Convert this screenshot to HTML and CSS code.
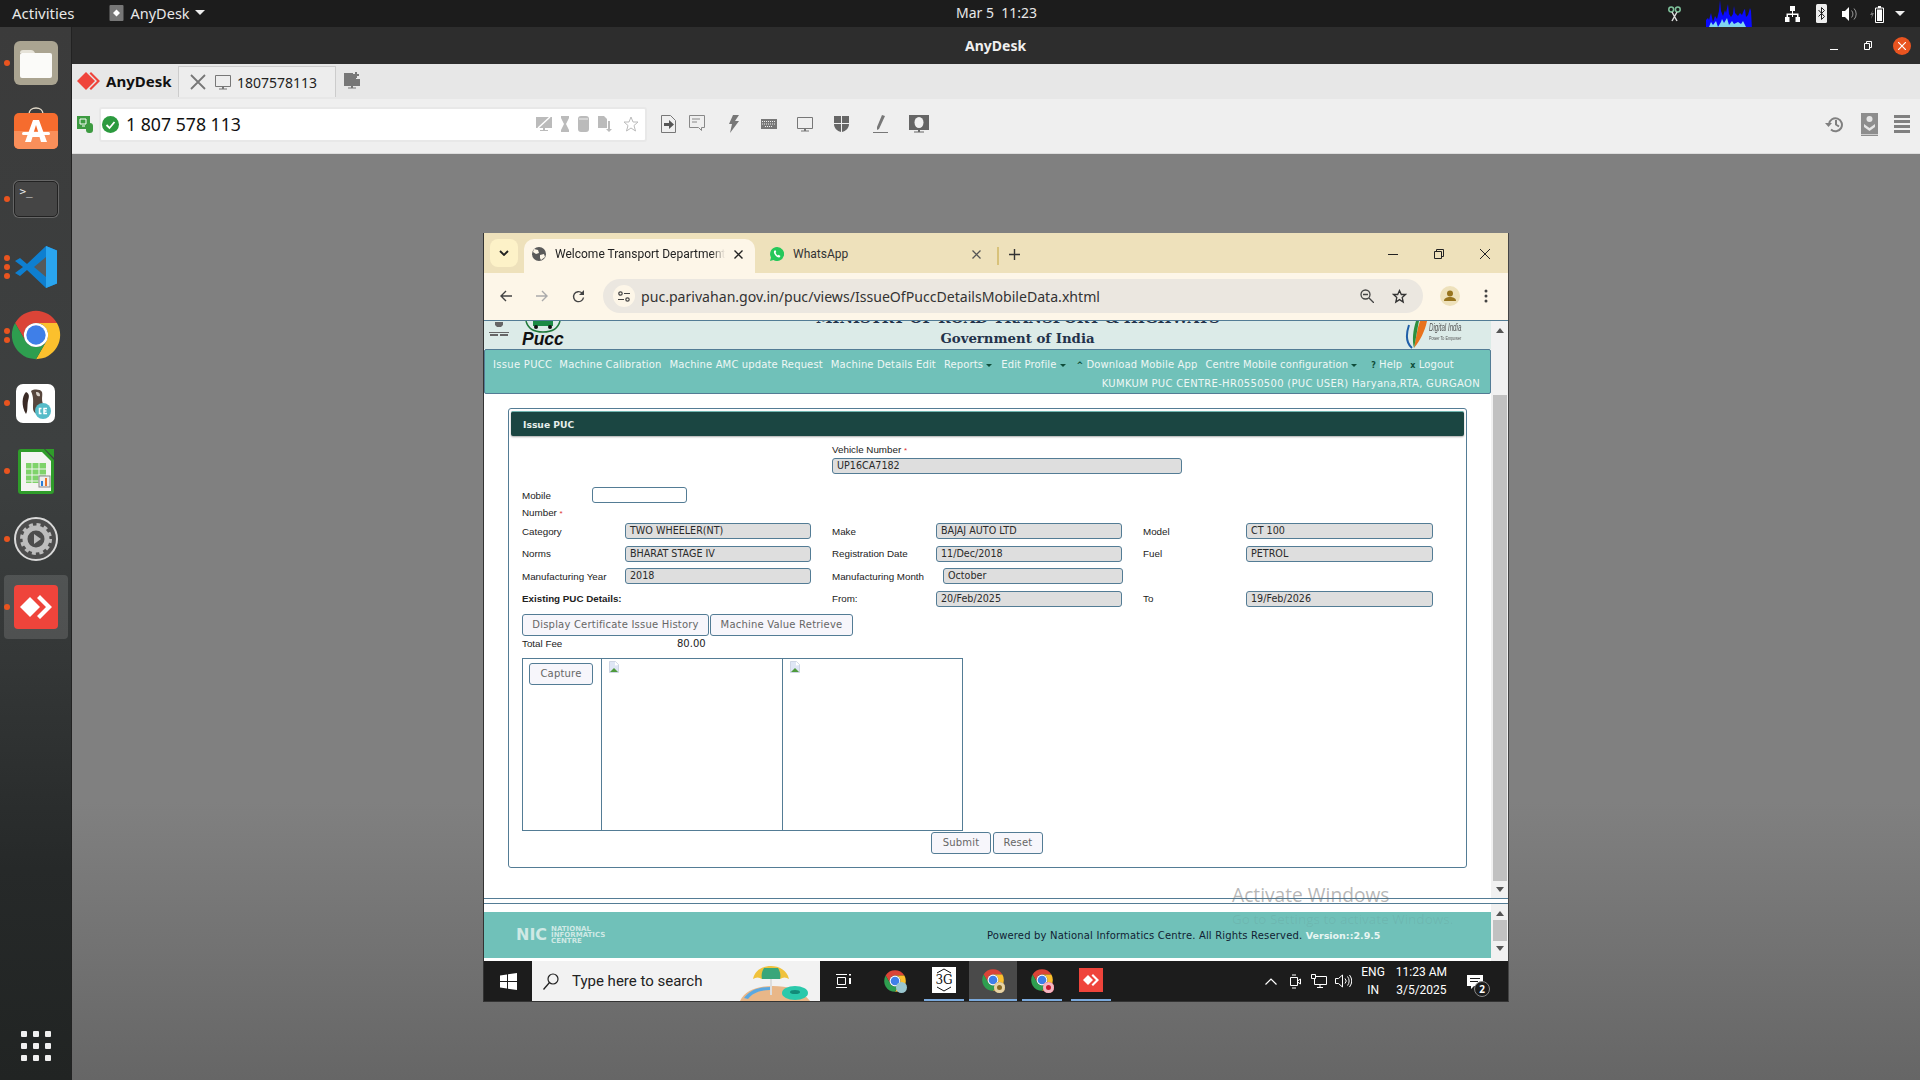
FILE: index.html
```html
<!DOCTYPE html>
<html lang="en">
<head>
    <meta charset="UTF-8">
    <meta name="viewport" content="width=device-width, initial-scale=1.0">
    <title>AnyDesk</title>
    <link rel="stylesheet" href="styles.css">
</head>
<body>
    <!-- shared icons -->
    <svg class="defs" width="0" height="0">
        <symbol id="chrome" viewBox="0 0 48 48">
            <path fill="#db4437" d="M6.68 14A20 20 0 0 1 41.32 14H24A10 10 0 0 0 15.34 29Z"/>
            <path fill="#fbc02d" d="M41.32 14A20 20 0 0 1 24 44L32.66 29A10 10 0 0 0 24 14Z"/>
            <path fill="#2e9e4f" d="M24 44A20 20 0 0 1 6.68 14L15.34 29A10 10 0 0 0 32.66 29Z"/>
            <circle cx="24" cy="24" r="10" fill="#fff"/>
            <circle cx="24" cy="24" r="8" fill="#3f7fe8"/>
        </symbol>
        <symbol id="monitor" viewBox="0 0 16 16">
            <path fill="none" stroke="currentColor" d="M.5 1.5h15v11H.5z"/>
            <path fill="currentColor" d="M7 13h2v1.500h3v1H4v-1h3z"/>
        </symbol>
        <symbol id="broken" viewBox="0 0 10 12">
            <path fill="#dfe6f5" stroke="#b9c2d6" stroke-width=".6" d="M.5.500h6l3 3v8h-9z"/>
            <path fill="#4f9a3c" d="M1 11l4-4 4 4z"/>
            <path fill="#fff" d="M6 .5l3.500 3.500-3.500.500z"/>
        </symbol>
    </svg>

    <div class="topbar">
        <span class="activities">Activities</span>
        <div class="app-menu">
            <svg class="app-menu-icon" viewBox="0 0 14 16"><rect width="14" height="16" rx="1" fill="#777"/><path fill="#fff" d="M7 4.500l3.500 3.500L7 11.500 3.500 8z"/></svg>
            <span>AnyDesk</span>
            <span class="caret"></span>
        </div>
        <div class="clock">Mar 5&nbsp; 11:23</div>
        <div class="tray">
            <svg class="tray-scissors" width="13" height="16" viewBox="0 0 13 16"><circle cx="3.200" cy="3.500" r="2.400" fill="none" stroke="#7fc29b" stroke-width="1.500"/><circle cx="9.800" cy="3.500" r="2.400" fill="none" stroke="#7fc29b" stroke-width="1.500"/><path stroke="#ddd" stroke-width="1.500" d="M4 6l5 9M9 6l-5 9"/></svg>
            <svg class="tray-graph" width="50" height="27" viewBox="0 0 50 27">
                <path fill="#0a0aff" d="M0 27V20l2-2 1 2 2-7 2 9 2-6 2 3 2-8 1-11 1 11 2 5 2-6 1 3 2-9 1 10 2 3 2-3 1-8 1 7 3 3 2-3 2 2 2-5 1-1 1 8 2-2 2-7 1 3 1 18z"/>
                <path fill="#7fd6f0" d="M3 27l2-5 2 3 3-4 2 6 3-5 1-3 2 4 3-5 2 7 3-4 2 3 4-2 3 2 2-3 3 6z"/>
            </svg>
            <svg class="tray-net" width="15" height="16" viewBox="0 0 15 16"><path fill="#fff" d="M5 0h5v5H8v2.500h5.500V11H12V9H8v2H7V9H3v2H1.500V7.500H7V5H5zM0 11h4.500v5H0zM10.500 11H15v5h-4.500z"/></svg>
            <svg class="tray-bt" width="11" height="19" viewBox="0 0 11 19"><rect width="11" height="19" rx="1.500" fill="#eee"/><path fill="none" stroke="#222" d="M2.500 6l6 6.500-3 3V3.500l3 3-6 6"/></svg>
            <svg class="tray-vol" width="15" height="14" viewBox="0 0 15 14"><path fill="#fff" d="M0 4h3l4-4v14l-4-4H0z"/><path fill="none" stroke="#999" d="M9.500 3.500a5 5 0 0 1 0 7M12 1.500a8 8 0 0 1 0 11"/></svg>
            <svg class="tray-bat" width="14" height="18" viewBox="0 0 14 18"><path fill="#777" d="M3 5L0 10h2l-1 4 3-6H2z"/><path fill="none" stroke="#fff" d="M5.500 3h8v14.500h-8z"/><path fill="#fff" d="M8 1h3v2H8zM7 4.500h5v11.500H7z"/></svg>
            <span class="caret tray-caret"></span>
        </div>
    </div>

    <div class="main">
        <!-- ubuntu dock -->
        <div class="dock">
            <div class="dock-item">
                <i class="dot"></i>
                <svg width="44" height="44" viewBox="0 0 44 44"><rect width="44" height="44" rx="6" fill="#aaa491"/><path fill="#e6e3d9" d="M6 12c0-2 1-3 3-3h8c2 0 3 1 4 3z"/><rect x="6" y="12" width="32" height="25" rx="2" fill="#fbfbf9"/></svg>
            </div>
            <div class="dock-item store">
                <svg width="44" height="48" viewBox="0 0 44 48"><path fill="none" stroke="#e5dccb" stroke-width="1.500" d="M15 7c0-8 14-8 14 0"/><rect y="6" width="44" height="36" rx="5" fill="#f66c2e"/><path fill="#f98f5a" d="M0 24h44v13a5 5 0 0 1-5 5H5a5 5 0 0 1-5-5z"/><path fill="#fff" d="M19 13h6l8 22h-6l-1.500-5h-7L17 35h-6zM22 18l-2.500 8h5z"/><rect x="8" y="25" width="28" height="3" rx="1.500" fill="#fff"/></svg>
            </div>
            <div class="dock-item">
                <i class="dot"></i>
                <div class="term-icon"><span>&gt;_</span></div>
            </div>
            <div class="dock-item">
                <i class="dot dot-a"></i><i class="dot"></i><i class="dot dot-b"></i>
                <svg width="42" height="42" viewBox="0 0 42 42"><path fill="#0e7fd0" d="M31 0l11 4.500v33L31 42 12 24l-7 6-5-3 8-6-8-6 5-3 7 6z"/><path fill="#2aa5ef" d="M31 0l11 4.500v33L31 42z"/><path fill="#555a5c" d="M31 11L19 21l12 10z"/></svg>
            </div>
            <div class="dock-item">
                <i class="dot dot-c"></i><i class="dot dot-d"></i>
                <svg width="58" height="58" class="chrome-big"><use href="#chrome"/></svg>
            </div>
            <div class="dock-item">
                <i class="dot"></i>
                <svg width="39" height="39" viewBox="0 0 39 39"><rect width="39" height="39" rx="7" fill="#fff"/><path fill="#3a2a25" d="M10 8c-4 4-5 14 0 22 2-3 1-8 2-13 1-4 2-7-2-9z"/><path fill="#57463d" d="M15 7c3-2 9-2 11 1 1 4-1 6 1 12 1 4 0 7-2 10-4 1-8-1-8-6 0-6 1-10-2-17z"/><path fill="#d8d0c8" d="M20 8c3 0 4 1 4 4-2 1-4 0-4-4z"/><circle cx="27" cy="27" r="8" fill="#56bcc9"/><path fill="none" stroke="#fff" stroke-width="1.500" d="M25.500 24.500h-2v5h2M31 24.500h-3v5h3M28 27h2.500"/></svg>
            </div>
            <div class="dock-item">
                <i class="dot"></i>
                <svg width="36" height="45" viewBox="0 0 36 45"><path fill="#2f9c2a" d="M3 0h23l10 11v31a3 3 0 0 1-3 3H3a3 3 0 0 1-3-3V3a3 3 0 0 1 3-3z"/><path fill="#f4f4f2" d="M3 3h21l9 9v30H3z"/><path fill="#2f9c2a" d="M27 0l9 0v9z"/><path fill="#7fd36a" d="M8 14h20v20H8z"/><path stroke="#f4f4f2" d="M8 20h20M8 26h20M8 32h20M14 14v20M21 14v20"/><rect x="21" y="27" width="11" height="11" fill="#eee" stroke="#888"/><path fill="#e9762b" d="M27 29h2v8h-2z"/><path fill="#2b7dd6" d="M23 32h2v5h-2z"/></svg>
            </div>
            <div class="dock-item">
                <i class="dot"></i>
                <svg width="44" height="44" viewBox="0 0 44 44"><circle cx="22" cy="22" r="21" fill="#4d4d4d" stroke="#d9d9d9" stroke-width="2"/><circle cx="22" cy="22" r="11" fill="none" stroke="#bdbdbd" stroke-width="5"/><circle cx="22" cy="22" r="14.500" fill="none" stroke="#bdbdbd" stroke-width="3" stroke-dasharray="4 3.600"/><path fill="#bdbdbd" d="M20 17l7 5-7 5z"/></svg>
            </div>
            <div class="dock-item is-active">
                <i class="dot"></i>
                <svg width="44" height="44" viewBox="0 0 44 44"><rect width="44" height="44" rx="4" fill="#ef443b"/><path fill="#fff" d="M6 22l10-10 10 10-10 10z"/><path fill="#fff" d="M26 10l12 12-12 12-3-3 9-9-9-9z"/></svg>
            </div>
            <div class="apps-grid">
                <i></i><i></i><i></i><i></i><i></i><i></i><i></i><i></i><i></i>
            </div>
        </div>

        <div class="app">
            <div class="titlebar">
                <span class="titlebar-name">AnyDesk</span>
                <div class="win-buttons">
                    <svg width="8" height="8" viewBox="0 0 8 8"><path stroke="#fff" d="M0 7.500h8"/></svg>
                    <svg width="8" height="9" viewBox="0 0 8 9"><path fill="none" stroke="#fff" d="M.5 2.500h5v6h-5zM2.500 2V.5h5v6H6"/></svg>
                    <span class="win-close"><svg width="8" height="8" viewBox="0 0 8 8"><path stroke="#fff" stroke-width="1.200" d="M0 0l8 8M8 0L0 8"/></svg></span>
                </div>
            </div>

            <div class="ad-tabs">
                <svg class="ad-logo" width="23" height="18" viewBox="0 0 23 18"><path fill="#ef443b" d="M0 9l9-9 9 9-9 9z"/><path fill="#ef443b" d="M14 0l9 9-9 9-1.500-1.500L20 9l-7.500-7.500z"/></svg>
                <b class="ad-brand">AnyDesk</b>
                <div class="ad-tab">
                    <svg width="16" height="16" viewBox="0 0 16 16"><path stroke="#777" stroke-width="1.800" d="M1 1l14 14M15 1L1 15"/></svg>
                    <svg class="ad-tab-mon" width="16" height="16"><use href="#monitor"/></svg>
                    <span>1807578113</span>
                </div>
                <svg class="ad-add" width="16" height="17" viewBox="0 0 16 17"><path fill="#777" d="M0 1h9v3h3v3h4v7H9v1.500h3v1H4v-1h3V14H0z"/><path fill="#777" d="M11 0h2v2h2v2h-2v2h-2V4H9V2h2z"/></svg>
            </div>

            <div class="ad-toolbar">
                <svg class="ad-status" width="16" height="17" viewBox="0 0 16 17"><rect width="13" height="13" fill="#3d9b41"/><path fill="none" stroke="#fff" d="M3 3h6v5H3zM5 10h3"/><rect x="9" y="7" width="7" height="10" rx="3" fill="#3d9b41"/></svg>
                <div class="address">
                    <svg width="17" height="17" viewBox="0 0 17 17"><circle cx="8.500" cy="8.500" r="8.500" fill="#2c9a3f"/><path fill="none" stroke="#fff" stroke-width="1.800" d="M4.500 9l3 3 5-6"/></svg>
                    <span class="address-text">1 807 578 113</span>
                    <div class="address-icons">
                        <svg width="16" height="16" viewBox="0 0 16 16"><path fill="#bbb" d="M0 1h16v11H9v2h3v1H4v-1h3v-2H0z"/><path stroke="#fff" stroke-width="1.500" d="M2 12L14 1"/></svg>
                        <svg width="8" height="16" viewBox="0 0 8 16"><path fill="#bbb" d="M0 0h8v2L5 8l3 6v2H0v-2l3-6-3-6z"/></svg>
                        <svg width="11" height="16" viewBox="0 0 11 16"><rect width="11" height="16" rx="3" fill="#bbb"/><path stroke="#eee" d="M1 3h9"/></svg>
                        <svg width="16" height="16" viewBox="0 0 16 16"><path fill="#bbb" d="M0 0h6l3 3v9H0z"/><path fill="#bbb" d="M10 5h2v8h2l-3 3-3-3h2z"/></svg>
                        <svg width="16" height="16" viewBox="0 0 16 16"><path fill="none" stroke="#bbb" d="M8 1l2 5h5l-4 3.500 1.500 5.500L8 12l-4.500 3L5 9.500 1 6h5z"/></svg>
                    </div>
                </div>
                <div class="ad-actions">
                    <svg width="15" height="18" viewBox="0 0 15 18"><path fill="none" stroke="#777" d="M.5.500h9l5 5v12H.5z"/><path fill="#555" d="M3 8h5V5l5 4.500L8 14v-3H3z"/></svg>
                    <svg width="16" height="18" viewBox="0 0 16 18"><path fill="none" stroke="#888" d="M.5.500h15v12h-3v3l-3-3h-9z"/><path stroke="#888" d="M3 4h8M3 7h5"/></svg>
                    <svg width="10" height="18" viewBox="0 0 10 18"><path fill="#777" d="M4 0h6L6 6h4L1 18l2-9H0z"/></svg>
                    <svg width="16" height="10" viewBox="0 0 16 10"><rect width="16" height="10" fill="#777"/><path stroke="#eee" stroke-dasharray="1 1" d="M1 2.500h14M1 5h14M4 7.500h8"/></svg>
                    <svg width="16" height="16" class="mon-grey"><use href="#monitor"/></svg>
                    <svg width="15" height="16" viewBox="0 0 15 16"><path fill="#666" d="M0 0h7v7H0zM8 0h7v7H8zM0 8h7v8c-4-1-7-4-7-8zM8 8h7c0 4-3 7-7 8z"/></svg>
                    <svg width="15" height="18" viewBox="0 0 15 18"><path fill="#777" d="M9 0l3 1-6 13-2 1V12z"/><path stroke="#777" d="M0 17.500h15"/></svg>
                    <svg width="20" height="18" viewBox="0 0 20 18"><path fill="#666" d="M0 0h20v15h-9v1.500h4v1H5v-1h4V15H0z"/><ellipse cx="10" cy="7.500" rx="4.500" ry="5.500" fill="#f2f2f2"/></svg>
                </div>
                <div class="ad-right">
                    <svg class="ad-history" width="18" height="18" viewBox="0 0 18 18"><path fill="none" stroke="#808080" stroke-width="2" d="M4 9a6.500 6.500 0 1 1 2 5.500M11 5v4.500l3 2"/><path fill="#808080" d="M0 8h7l-3.500 4z"/></svg>
                    <svg width="17" height="23" viewBox="0 0 17 23"><rect width="17" height="23" fill="#8d8d8d"/><path stroke="#ccc" d="M0 21.500h17"/><circle cx="8.500" cy="6" r="3" fill="#e5e5e5"/><path fill="#e5e5e5" d="M3 11l5.500 4 5.500-4v3l-5.500 4L3 14z"/></svg>
                    <svg width="16" height="18" viewBox="0 0 16 18"><path fill="#808080" d="M0 0h16v3H0zM0 5h16v3H0zM0 10h16v3H0zM0 15h16v3H0z"/></svg>
                </div>
            </div>

            <div class="remote">
                <!-- remote windows machine -->
                <div class="remote-window">
                    <div class="chrome-tabs">
                        <div class="tab-search"><svg width="10" height="6" viewBox="0 0 10 6"><path fill="none" stroke="#222" stroke-width="1.800" d="M1 1l4 4 4-4"/></svg></div>
                        <div class="chrome-tab is-current">
                            <svg width="14" height="14" viewBox="0 0 14 14"><circle cx="7" cy="7" r="7" fill="#5a5a5a"/><path fill="#fdf6e8" d="M2 2l4 1 1 3-3 1-3-2zM8 8l4-1 1 3-4 3-1-2z"/></svg>
                            <span class="tab-title">Welcome Transport Department</span>
                            <svg class="tab-x" width="9" height="9" viewBox="0 0 9 9"><path stroke="#222" stroke-width="1.400" d="M.5.5l8 8M8.500.5l-8 8"/></svg>
                        </div>
                        <div class="chrome-tab">
                            <svg width="14" height="14" viewBox="0 0 14 14"><path fill="#25c85a" d="M7 0a7 7 0 1 1-3.500 13L0 14l1-3.500A7 7 0 0 1 7 0z"/><path fill="#fff" d="M4.500 3.500c-1 1-.8 2.800.8 4.700 1.600 1.900 3.300 2.600 4.400 2l.8-1.200-1.900-1.200-.8.800C7 8 6 7 5.500 5.800l.8-.7-.8-1.800z"/></svg>
                            <span class="tab-title">WhatsApp</span>
                            <svg class="tab-x" width="9" height="9" viewBox="0 0 9 9"><path stroke="#555" stroke-width="1.300" d="M.5.5l8 8M8.500.5l-8 8"/></svg>
                        </div>
                        <i class="tab-sep"></i>
                        <svg class="tab-new" width="11" height="11" viewBox="0 0 11 11"><path stroke="#333" stroke-width="1.400" d="M5.500 0v11M0 5.500h11"/></svg>
                        <div class="chrome-win">
                            <svg width="10" height="10" viewBox="0 0 10 10"><path stroke="#222" d="M0 5.500h10"/></svg>
                            <svg width="10" height="10" viewBox="0 0 10 10"><path fill="none" stroke="#222" d="M.5 2.500h7v7h-7zM2.500 2V.5h7v7H8"/></svg>
                            <svg width="10" height="10" viewBox="0 0 10 10"><path stroke="#222" d="M0 0l10 10M10 0L0 10"/></svg>
                        </div>
                    </div>
                    <div class="chrome-bar">
                        <svg width="12" height="12" viewBox="0 0 12 12"><path fill="none" stroke="#444" stroke-width="1.400" d="M12 6H1M6 1L1 6l5 5"/></svg>
                        <svg width="12" height="12" viewBox="0 0 12 12"><path fill="none" stroke="#aaa" stroke-width="1.400" d="M0 6h11M6 1l5 5-5 5"/></svg>
                        <svg width="13" height="13" viewBox="0 0 13 13"><path fill="none" stroke="#444" stroke-width="1.400" d="M11.500 7.500a5 5 0 1 1-1.500-4.500L11.500 4.500"/><path fill="#444" d="M12 0v5H7z"/></svg>
                        <div class="omnibox">
                            <span class="site-chip"><svg width="12" height="11" viewBox="0 0 12 11"><circle cx="2.500" cy="2.500" r="1.700" fill="none" stroke="#444" stroke-width="1.200"/><circle cx="9.500" cy="8.500" r="1.700" fill="none" stroke="#444" stroke-width="1.200"/><path stroke="#444" stroke-width="1.200" d="M6 2.500h6M0 8.500h6"/></svg></span>
                            <span class="url">puc.parivahan.gov.in/puc/views/IssueOfPuccDetailsMobileData.xhtml</span>
                            <svg class="omni-zoom" width="14" height="14" viewBox="0 0 14 14"><circle cx="5.500" cy="5.500" r="4.500" fill="none" stroke="#444" stroke-width="1.300"/><path stroke="#444" stroke-width="1.300" d="M3 5.500h5M9 9l5 5"/></svg>
                            <svg class="omni-star" width="15" height="15" viewBox="0 0 15 15"><path fill="none" stroke="#333" stroke-width="1.300" d="M7.500 1.500l1.800 4h4.200l-3.300 3 1 4.500-3.700-2.400L3.800 13l1-4.500-3.300-3h4.200z"/></svg>
                        </div>
                        <svg class="bar-profile" width="20" height="20" viewBox="0 0 20 20"><circle cx="10" cy="10" r="10" fill="#eee1bb"/><circle cx="10" cy="7.500" r="3" fill="#97741f"/><path fill="#97741f" d="M4 15c0-3 3-4 6-4s6 1 6 4z"/></svg>
                        <svg class="bar-menu" width="4" height="14" viewBox="0 0 4 14"><circle cx="2" cy="2" r="1.500" fill="#444"/><circle cx="2" cy="7" r="1.500" fill="#444"/><circle cx="2" cy="12" r="1.500" fill="#444"/></svg>
                    </div>

                    <div class="page">
                        <div class="frame-top">
                            <div class="frame-body">
                                <div class="site-header">
                                    <div class="emblem"><svg width="22" height="15" viewBox="0 0 22 15"><path fill="#666" d="M7 0h8v3l-2 2H9L7 3zM1 10h20v1H1zM2 12h8v2H2zM12 12h8v2h-8z"/></svg></div>
                                    <div class="pucc-logo">
                                        <svg width="36" height="12" viewBox="0 0 36 12"><path fill="none" stroke="#1f7a3a" stroke-width="1.500" d="M1 0c2 8 9 11 17 11s15-3 17-11"/><path fill="#1b8a45" d="M8 0h20v5H8z"/><circle cx="11" cy="6" r="2" fill="#111"/><circle cx="25" cy="6" r="2" fill="#111"/></svg>
                                        <span>Pucc</span>
                                    </div>
                                    <div class="site-title">
                                        <div class="ministry">MINISTRY OF ROAD TRANSPORT &amp; HIGHWAYS</div>
                                        <div class="goi">Government of India</div>
                                    </div>
                                    <div class="digital-india">
                                        <svg width="24" height="28" viewBox="0 0 24 28"><path fill="none" stroke="#1f5fa8" stroke-width="2" d="M4 4c-3 9-3 18 3 23"/><path fill="#e8721c" d="M22 0c-2 10-7 20-13 27 2-9 3-19 6-27z"/><path fill="#2c8f3e" d="M14 0c-2 9-3 18-5 27-2-8-1-18 2-27z"/></svg>
                                        <div class="di-text"><i>Digital India</i><small>Power To Empower</small></div>
                                    </div>
                                </div>
                                <div class="menu">
                                    <div class="menu-row">
                                        <span class="m1">Issue PUCC</span>
                                        <span class="m2">Machine Calibration</span>
                                        <span class="m3">Machine AMC update Request</span>
                                        <span class="m4">Machine Details Edit</span>
                                        <span class="m5">Reports<i class="menu-caret"></i></span>
                                        <span class="m6">Edit Profile<i class="menu-caret"></i></span>
                                        <span class="m7"><b class="mi">^</b>Download Mobile App</span>
                                        <span class="m8">Centre Mobile configuration<i class="menu-caret"></i></span>
                                        <span class="m9"><b class="mi">?</b>Help</span>
                                        <span class="m10"><b class="mi">x</b>Logout</span>
                                    </div>
                                    <div class="menu-user">KUMKUM PUC CENTRE-HR0550500 (PUC USER) Haryana,RTA, GURGAON</div>
                                </div>

                                <div class="panel">
                                    <div class="panel-title">Issue PUC</div>
                                    <div class="vehicle">
                                        <label>Vehicle Number <em>*</em></label>
                                        <div class="field field-vehicle">UP16CA7182</div>
                                    </div>
                                    <div class="mobile">
                                        <label>Mobile</label>
                                        <div class="field field-mobile"></div>
                                    </div>
                                    <label class="mobile-2">Number <em>*</em></label>

                                    <div class="details">
                                        <label>Category</label><div class="field">TWO WHEELER(NT)</div><i></i>
                                        <label>Make</label><div class="field">BAJAJ AUTO LTD</div><i></i>
                                        <label>Model</label><div class="field">CT 100</div>

                                        <label>Norms</label><div class="field">BHARAT STAGE IV</div><i></i>
                                        <label>Registration Date</label><div class="field">11/Dec/2018</div><i></i>
                                        <label>Fuel</label><div class="field">PETROL</div>

                                        <label>Manufacturing Year</label><div class="field">2018</div><i></i>
                                        <label>Manufacturing Month</label><div class="field field-month">October</div><i></i>
                                        <span></span><span></span>

                                        <label class="strong">Existing PUC Details:</label><span></span><i></i>
                                        <label>From:</label><div class="field">20/Feb/2025</div><i></i>
                                        <label>To</label><div class="field">19/Feb/2026</div>
                                    </div>

                                    <div class="actions">
                                        <button type="button" class="btn btn-history">Display Certificate Issue History</button>
                                        <button type="button" class="btn btn-machine">Machine Value Retrieve</button>
                                    </div>
                                    <div class="fee">
                                        <label>Total Fee</label>
                                        <span class="fee-value">80.00</span>
                                    </div>

                                    <div class="capture">
                                        <div class="capture-cell capture-btn"><button type="button" class="btn">Capture</button></div>
                                        <div class="capture-cell"><svg width="10" height="12"><use href="#broken"/></svg></div>
                                        <div class="capture-cell"><svg width="10" height="12"><use href="#broken"/></svg></div>
                                    </div>
                                    <div class="submit-row">
                                        <button type="button" class="btn btn-submit">Submit</button>
                                        <button type="button" class="btn btn-reset">Reset</button>
                                    </div>
                                </div>
                            </div>
                            <div class="scrollbar scrollbar-top">
                                <i class="arrow-up"></i>
                                <div class="thumb"></div>
                                <i class="arrow-down"></i>
                            </div>
                        </div>

                        <div class="frame-bottom">
                            <div class="frame-body">
                                <div class="footer">
                                    <div class="nic">
                                        <b>NIC</b>
                                        <span>NATIONAL<br>INFORMATICS<br>CENTRE</span>
                                    </div>
                                    <div class="powered">Powered by National Informatics Centre. All Rights Reserved. <b>Version::2.9.5</b></div>
                                </div>
                            </div>
                            <div class="scrollbar scrollbar-bottom">
                                <i class="arrow-up"></i>
                                <div class="thumb"></div>
                                <i class="arrow-down"></i>
                            </div>
                        </div>

                        <div class="activate">
                            <div class="activate-1">Activate Windows</div>
                            <div class="activate-2">Go to Settings to activate Windows.</div>
                        </div>
                    </div>

                    <div class="taskbar">
                        <div class="win-start"><svg width="17" height="17" viewBox="0 0 17 17"><path fill="#fff" d="M0 2.500l7-1v6.500H0zM8 1.300L17 0v8H8zM0 9h7v6.500l-7-1zM8 9h9v8l-9-1.300z"/></svg></div>
                        <div class="win-search">
                            <svg width="16" height="17" viewBox="0 0 16 17"><circle cx="10" cy="6" r="5" fill="none" stroke="#222" stroke-width="1.200"/><path stroke="#222" stroke-width="1.300" d="M6.500 9.500L.5 16.500"/></svg>
                            <span>Type here to search</span>
                            <svg class="beach" width="80" height="40" viewBox="0 0 80 40"><path fill="#e9b788" d="M0 40c5-11 18-15 33-15 14 0 28 3 37 15z"/><path fill="#5ba8e0" d="M4 37c6-8 15-11 26-11v3C20 29 12 32 8 38z"/><path stroke="#ddd" stroke-width="2" d="M31 5v29"/><path fill="#f0c23c" d="M13 18c2-9 10-13 18-13s16 4 18 13c-3-2-6-2-9 0-3-2-6-2-9 0-3-2-6-2-9 0-3-2-6-2-9 0z"/><path fill="#39a67a" d="M24 7c-2 3-3 7-2 11h18c1-4 0-8-2-11z"/><ellipse cx="55" cy="32" rx="13" ry="7" fill="#2bc9ab"/><ellipse cx="55" cy="31" rx="5" ry="2" fill="#128a78"/></svg>
                        </div>
                        <div class="task-icon task-view"><svg width="16" height="16" viewBox="0 0 16 16"><path fill="none" stroke="#fff" d="M1.500 4.500h8v7h-8zM0 1.500h11M0 14.500h11"/><path fill="#fff" d="M13 1h2v1.500h-2zM13 5h2v6h-2z"/></svg></div>
                        <div class="task-icon task-c1"><svg width="26" height="26"><use href="#chrome"/></svg><i class="badge badge-a"></i></div>
                        <div class="task-icon task-3g is-open">
                            <div class="g3">
                                <svg width="24" height="26" viewBox="0 0 24 26"><path fill="none" stroke="#111" d="M5 6l7-4 7 4M5 20l7 4 7-4"/></svg>
                                <span>3G</span>
                            </div>
                        </div>
                        <div class="task-icon task-c2 is-open is-focus"><svg width="26" height="26"><use href="#chrome"/></svg><i class="badge badge-b"></i></div>
                        <div class="task-icon task-c3 is-open"><svg width="26" height="26"><use href="#chrome"/></svg><i class="badge badge-c"></i></div>
                        <div class="task-icon task-ad is-open"><svg width="24" height="24" viewBox="0 0 24 24"><rect width="24" height="24" fill="#ef443b"/><path fill="#fff" d="M4 12l5-5 5 5-5 5z"/><path fill="#fff" d="M14 6l6 6-6 6-1.500-1.500L17 12l-4.500-4.500z"/></svg></div>

                        <div class="win-tray">
                            <svg width="12" height="7" viewBox="0 0 12 7"><path fill="none" stroke="#fff" stroke-width="1.200" d="M.5 6.500L6 1l5.500 5.500"/></svg>
                            <svg width="11" height="15" viewBox="0 0 11 15"><path fill="none" stroke="#fff" d="M.5 3.500h7v8h-7zM7.500 7l3-2v5l-3-2M2 1h4M2 14h4"/></svg>
                            <svg width="16" height="14" viewBox="0 0 16 14"><path fill="none" stroke="#fff" d="M3.500 2.500h12v8h-12zM9 10.500V13M6 13.500h6"/><path fill="#1c1c1c" stroke="#fff" d="M.5.500h4v4h-4z"/></svg>
                            <svg width="17" height="14" viewBox="0 0 17 14"><path fill="none" stroke="#fff" d="M.5 4.500h3l4-3.500v12l-4-3.500h-3zM10 4.500a3.500 3.500 0 0 1 0 5M12.500 2.500a7 7 0 0 1 0 9M14.500 1a10 10 0 0 1 0 12"/></svg>
                            <div class="lang">ENG<br>IN</div>
                            <div class="win-clock">11:23 AM<br>3/5/2025</div>
                            <div class="notify">
                                <svg width="16" height="15" viewBox="0 0 16 15"><path fill="#fff" d="M0 0h16v11H7l-3 3v-3H0z"/><path stroke="#1c1c1c" d="M3 3.500h10M3 6.500h8"/></svg>
                                <span class="notify-count">2</span>
                            </div>
                        </div>
                    </div>
                </div>
            </div>
        </div>
    </div>
</body>
</html>
```

FILE: styles.css
```css
/* Desktop frame */
html, body {
    margin: 0;
    padding: 0;
}

body {
    width: 1920px;
    height: 1080px;
    overflow: hidden;
    display: flex;
    flex-direction: column;
    font-family: "Noto Sans", sans-serif;
    background: #808080;
}

.defs {
    position: absolute;
}

svg {
    display: block;
    flex: none;
}

/* Gnome top bar */
.topbar {
    height: 27px;
    flex: none;
    display: flex;
    align-items: center;
    background: #1c1c1c;
    color: #e8e8e8;
    font-size: 14px;
    position: relative;
}

.activities {
    margin: -2px 0 0 12px;
    font-size: 15px;
}

.app-menu {
    display: flex;
    align-items: center;
    margin: -2px 0 0 34px;
    font-size: 14.500px;
}

.app-menu-icon {
    width: 15px;
    height: 16px;
    margin-right: 7px;
}

.caret {
    width: 0;
    height: 0;
    margin-left: 5px;
    border-left: 5px solid transparent;
    border-right: 5px solid transparent;
    border-top: 5px solid #eee;
}

.clock {
    position: absolute;
    left: 956px;
    margin-top: -2px;
}

.tray {
    margin-left: auto;
    display: flex;
    align-items: center;
    height: 27px;
}

.tray-scissors { margin-right: 25px; }
.tray-graph { margin-right: 29px; }
.tray-net { margin-right: 16px; }
.tray-bt { margin-right: 15px; }
.tray-vol { margin-right: 13px; }
.tray-bat { margin-right: 0; }
.tray-caret { margin: 0 15px 0 11px; }

.main {
    flex: 1;
    display: flex;
    min-height: 0;
}

/* Ubuntu dock */
.dock {
    width: 72px;
    flex: none;
    box-sizing: border-box;
    display: flex;
    flex-direction: column;
    padding-top: 2px;
    border-right: 1px solid #222;
    background: linear-gradient(#3b3b3b, #3d4040 40%, #343737 60%, #262929 80%, #212423);
}

.dock-item {
    height: 68px;
    flex: none;
    display: flex;
    align-items: center;
    justify-content: center;
    position: relative;
}

.chrome-big {
    overflow: visible;
}

.dot {
    position: absolute;
    left: 4px;
    top: 31px;
    width: 6px;
    height: 6px;
    border-radius: 50%;
    background: #e9541f;
}

.dot-a { top: 22px; }
.dot-b { top: 40px; }
.dot-c { top: 27px; }
.dot-d { top: 36px; }

.term-icon {
    width: 44px;
    height: 36px;
    box-sizing: border-box;
    border: 1px solid #222;
    border-radius: 5px;
    background: #454545;
    box-shadow: 0 0 0 1px #666;
    color: #eee;
    font: 11px/14px "DejaVu Sans Mono", monospace;
    padding: 3px 0 0 5px;
}

.is-active::before {
    content: "";
    position: absolute;
    left: 4px;
    top: 2px;
    width: 64px;
    height: 64px;
    border-radius: 4px;
    background: rgba(255, 255, 255, 0.13);
}

.is-active svg {
    position: relative;
}

.apps-grid {
    margin: auto 0 19px 21px;
    width: 30px;
    display: grid;
    grid-template-columns: repeat(3, 6px);
    gap: 6px;
}

.apps-grid i {
    height: 6px;
    border-radius: 1px;
    background: #f0f0f0;
}

/* AnyDesk window */
.app {
    flex: 1;
    min-width: 0;
    display: flex;
    flex-direction: column;
}

.titlebar {
    height: 37px;
    flex: none;
    display: flex;
    align-items: center;
    position: relative;
    background: #2d2d2d;
}

.titlebar-name {
    position: absolute;
    left: 893px;
    color: #f0f0f0;
    font-size: 14px;
    font-weight: 700;
}

.win-buttons {
    margin-left: auto;
    display: flex;
    align-items: center;
    gap: 26px;
    margin-right: 9px;
}

.win-close {
    width: 18px;
    height: 18px;
    border-radius: 50%;
    background: #e95420;
    display: flex;
    align-items: center;
    justify-content: center;
    margin-left: -5px;
}

.ad-tabs {
    height: 35px;
    flex: none;
    box-sizing: border-box;
    padding-bottom: 2px;
    display: flex;
    align-items: center;
    background: #e7e7e7;
}

.ad-logo {
    margin-left: 5px;
}

.ad-brand {
    margin-left: 6px;
    width: 72px;
    font-size: 15px;
    color: #111;
}

.ad-tab {
    width: 158px;
    height: 31px;
    margin-top: 2px;
    box-sizing: border-box;
    display: flex;
    align-items: center;
    padding-left: 11px;
    border: 1px solid #ccc;
    border-bottom: 0;
    background: #ededed;
    font-size: 14px;
    color: #222;
}

.ad-tab-mon {
    margin: 0 6px 0 9px;
    color: #777;
}

.ad-add {
    margin-left: 8px;
}

.ad-toolbar {
    height: 55px;
    flex: none;
    box-sizing: border-box;
    padding-bottom: 4px;
    display: flex;
    align-items: center;
    border-bottom: 1px solid #ddd;
    background: #efefef;
}

.ad-status {
    margin-left: 5px;
}

.address {
    width: 548px;
    height: 35px;
    margin-left: 6px;
    box-sizing: border-box;
    display: flex;
    align-items: center;
    padding-left: 1px;
    border: 2px solid #e8e8e8;
    border-radius: 3px;
    background: #fff;
}

.address-text {
    margin-left: 7px;
    font-size: 17.700px;
    color: #111;
}

.address-icons {
    margin-left: auto;
    margin-right: 6px;
    display: flex;
    align-items: center;
    gap: 9px;
}

.ad-actions {
    margin-left: 14px;
    display: flex;
    align-items: center;
}

.ad-actions svg:nth-child(1) { margin-right: 13px; }
.ad-actions svg:nth-child(2) { margin-right: 24px; }
.ad-actions svg:nth-child(3) { margin-right: 22px; }
.ad-actions svg:nth-child(4) { margin-right: 20px; }
.ad-actions svg:nth-child(5) { margin-right: 21px; }
.ad-actions svg:nth-child(6) { margin-right: 24px; }
.ad-actions svg:nth-child(7) { margin-right: 21px; }

.mon-grey {
    color: #777;
}

.ad-right {
    margin-left: auto;
    margin-right: 10px;
    display: flex;
    align-items: center;
    gap: 16px;
}

.ad-history {
    margin-right: 2px;
}

.remote {
    flex: 1;
    position: relative;
    background: linear-gradient(#808080 0, #808080 70%, #666 100%);
}

/* Remote desktop: a window on a free canvas */
.remote-window {
    position: absolute;
    left: 411px;
    top: 79px;
    width: 1026px;
    height: 769px;
    box-sizing: border-box;
    border-left: 1px solid #333;
    border-right: 1px solid #444;
    border-bottom: 1px solid #333;
    display: flex;
    flex-direction: column;
}

/* Chrome */
.chrome-tabs {
    height: 40px;
    flex: none;
    display: flex;
    align-items: flex-end;
    position: relative;
    background: #eee1bb;
    font: 12px Roboto, sans-serif;
    color: #222;
}

.tab-search {
    width: 28px;
    height: 28px;
    margin: 0 6px 6px 6px;
    border-radius: 8px;
    background: #fdf2c8;
    display: flex;
    align-items: center;
    justify-content: center;
}

.chrome-tab {
    width: 231px;
    height: 34px;
    box-sizing: border-box;
    padding: 0 12px 4px 8px;
    display: flex;
    align-items: center;
    gap: 9px;
    color: #333;
}

.chrome-tab.is-current {
    border-radius: 10px 10px 0 0;
    background: #fdf6e8;
    color: #222;
}

.chrome-tab:not(.is-current) {
    margin-left: 7px;
}

.tab-title {
    flex: 1;
    overflow: hidden;
    white-space: nowrap;
}

.is-current .tab-title {
    -webkit-mask-image: linear-gradient(to right, #000 92%, transparent);
    mask-image: linear-gradient(to right, #000 92%, transparent);
}

.tab-sep {
    width: 2px;
    height: 18px;
    margin: 0 0 8px 4px;
    background: #d8c27a;
}

.tab-new {
    margin: 0 0 13px 10px;
}

.chrome-win {
    margin: 0 0 14px auto;
    display: flex;
    gap: 36px;
    padding-right: 18px;
}

.chrome-bar {
    height: 47px;
    flex: none;
    box-sizing: border-box;
    display: flex;
    align-items: center;
    padding: 0 0 1px 16px;
    background: #fdf6e8;
}

.chrome-bar > svg:nth-child(1) { margin-right: 24px; }
.chrome-bar > svg:nth-child(2) { margin-right: 24px; }
.chrome-bar > svg:nth-child(3) { margin-right: 18px; }

.omnibox {
    width: 820px;
    height: 34px;
    display: flex;
    align-items: center;
    border-radius: 17px;
    background: #ebe7e0;
    font-size: 14.100px;
    color: #333;
}

.site-chip {
    width: 22px;
    height: 22px;
    margin-left: 10px;
    border-radius: 50%;
    background: #fdf6e8;
    display: flex;
    align-items: center;
    justify-content: center;
}

.url {
    margin-left: 6px;
    white-space: nowrap;
}

.omni-zoom {
    margin-left: auto;
}

.omni-star {
    margin: 0 16px 0 18px;
}

.bar-profile {
    margin-left: 17px;
}

.bar-menu {
    margin-left: 24px;
}

/* Page inside Chrome */
.page {
    flex: 1;
    min-height: 0;
    display: flex;
    flex-direction: column;
    position: relative;
    background: #fff;
    font-family: "DejaVu Sans", sans-serif;
}

.frame-top {
    height: 579px;
    flex: none;
    display: flex;
    box-sizing: border-box;
    border-bottom: 1px solid #537c95;
    border-top: 1px solid #537c95;
}

.frame-bottom {
    flex: 1;
    min-height: 0;
    margin-top: 4px;
    display: flex;
    border-top: 1px solid #537c95;
}

.frame-body {
    flex: 1;
    min-width: 0;
    overflow: hidden;
}

.scrollbar {
    width: 17px;
    flex: none;
    display: flex;
    flex-direction: column;
    align-items: center;
    background: #f1f1f1;
}

.scrollbar .thumb {
    width: 14px;
    background: #c1c1c1;
}

.arrow-up,
.arrow-down {
    width: 0;
    height: 0;
    border-left: 4px solid transparent;
    border-right: 4px solid transparent;
}

.arrow-up {
    border-bottom: 5px solid #555;
}

.arrow-down {
    border-top: 5px solid #555;
}

.scrollbar-top {
    padding-top: 7px;
}

.scrollbar-top .thumb {
    height: 486px;
    margin: 62px 0 6px;
}

.scrollbar-bottom {
    padding-top: 7px;
}

.scrollbar-bottom .thumb {
    height: 21px;
    margin: 4px 0 5px;
}

.site-header {
    height: 28px;
    display: flex;
    overflow: hidden;
    position: relative;
    background: #dcebe8;
}

.emblem {
    width: 38px;
    padding: 1px 0 0 4px;
    box-sizing: border-box;
}

.pucc-logo {
    width: 90px;
    position: relative;
}

.pucc-logo svg {
    margin-left: 3px;
}

.pucc-logo span {
    display: block;
    margin-top: -1px;
    font: italic 700 17.500px/14px "Liberation Sans", sans-serif;
    color: #111;
}

.site-title {
    width: 403px;
    margin-left: 204px;
    text-align: center;
    font-family: "DejaVu Serif", serif;
    font-weight: 700;
    color: #23324a;
    white-space: nowrap;
}

.ministry {
    font-size: 14.900px;
    line-height: 18px;
    margin-top: -12px;
    height: 18px;
}

.goi {
    font-size: 13.300px;
    line-height: 18px;
    margin-top: 3px;
}

.digital-india {
    margin-left: 186px;
    display: flex;
    color: #555;
}

.di-text {
    display: flex;
    flex-direction: column;
    margin-top: 1px;
    font-family: "Liberation Sans", sans-serif;
    font-size: 10px;
    line-height: 11px;
    white-space: nowrap;
    transform: scaleX(0.62);
    transform-origin: left top;
}

.di-text small {
    font-size: 6px;
}

.menu {
    height: 45px;
    box-sizing: border-box;
    border: 1px solid #537c95;
    border-radius: 2px;
    background: #70c1b9;
    color: #eef7f5;
    font-size: 10px;
    letter-spacing: 0.14px;
}

.menu-row {
    height: 29px;
    display: flex;
    align-items: center;
    white-space: nowrap;
    padding-left: 8px;
}

.m1 { letter-spacing: 0.3px; }
.m2 { margin-left: 7px; }
.m3 { margin-left: 8px; }
.m4 { margin-left: 8px; }
.m5 { margin-left: 8px; }
.m6 { margin-left: 9px; }
.m7 { margin-left: 11px; }
.m8 { margin-left: 8px; }
.m9 { margin-left: 14px; }
.m10 { margin-left: 8px; }

.menu-caret {
    display: inline-block;
    margin-left: 3px;
    vertical-align: middle;
    border-left: 3px solid transparent;
    border-right: 3px solid transparent;
    border-top: 3px solid #0f4d3a;
}

.mi {
    margin-right: 3px;
    color: #0f4d3a;
    font-size: 8px;
}

.menu-user {
    text-align: right;
    padding-right: 10px;
    margin-top: -1px;
    line-height: 12px;
    white-space: nowrap;
    letter-spacing: 0.3px;
}

.panel {
    margin: 14px 24px 0 24px;
    height: 460px;
    box-sizing: border-box;
    border: 1px solid #537c95;
    border-radius: 3px;
    padding: 2px;
    font-family: "Liberation Sans", sans-serif;
    font-size: 9.800px;
    color: #222;
}

.panel-title {
    height: 25px;
    box-sizing: border-box;
    padding-left: 12px;
    border-top: 1px solid #6fb5b0;
    border-radius: 2px;
    background: #1b4642;
    box-shadow: 0 1px 2px #aaa;
    color: #e6efec;
    font: 700 9.200px/25px "DejaVu Sans", sans-serif;
}

label em {
    color: #d33;
    font-style: normal;
    font-size: 8px;
}

.field {
    height: 16px;
    box-sizing: border-box;
    border: 1px solid #537c95;
    border-radius: 3px;
    padding-left: 4px;
    background: #dedede;
    color: #2a2a2a;
    font: 9.600px/14px "DejaVu Sans", sans-serif;
    white-space: nowrap;
}

.vehicle {
    margin: 6px 0 0 321px;
}

.vehicle label {
    display: block;
    line-height: 15px;
}

.field-vehicle {
    width: 350px;
}

.mobile {
    display: flex;
    align-items: center;
    margin: 13px 0 0 11px;
}

.mobile label {
    width: 70px;
}

.field-mobile {
    width: 95px;
    background: #fff;
}

.mobile-2 {
    display: block;
    margin: 3px 0 0 11px;
    line-height: 14px;
}

.details {
    margin: 2px 0 0 11px;
    display: grid;
    grid-template-columns: 103px 186px 21px 104px 186px 21px 103px 187px;
    grid-auto-rows: 16px;
    row-gap: 6.670px;
    align-items: center;
}

.field-month {
    margin-left: 7px;
    width: 180px;
}

.strong {
    font-weight: 700;
    white-space: nowrap;
}

.btn {
    height: 22px;
    box-sizing: border-box;
    border: 1px solid #537c95;
    border-radius: 3px;
    padding: 0;
    background: #f7f6fb;
    color: #666;
    font: 10px "DejaVu Sans", sans-serif;
    letter-spacing: 0.2px;
}

.actions {
    display: flex;
    gap: 1px;
    margin: 7px 0 0 11px;
}

.btn-history { width: 187px; }
.btn-machine { width: 143px; }

.fee {
    display: flex;
    align-items: center;
    height: 16px;
    margin: 0 0 1px 11px;
}

.fee label {
    width: 155px;
}

.fee-value {
    font: 10px "DejaVu Sans", sans-serif;
    margin-top: -1px;
}

.capture {
    margin: 6px 0 0 11px;
    width: 441px;
    height: 173px;
    box-sizing: border-box;
    display: grid;
    grid-template-columns: 78px 181px 1fr;
    border: 1px solid #537c95;
}

.capture-cell {
    padding: 2px 0 0 7px;
    border-left: 1px solid #537c95;
}

.capture-btn {
    border-left: 0;
    padding: 4px 0 0 6px;
}

.capture-btn .btn {
    width: 64px;
}

.submit-row {
    display: flex;
    gap: 2px;
    margin: 1px 0 0 420px;
}

.btn-submit { width: 60px; }
.btn-reset { width: 50px; }

/* Footer frame */
.footer {
    height: 46px;
    margin-top: 8px;
    display: flex;
    align-items: center;
    background: #70c1b9;
}

.nic {
    display: flex;
    align-items: center;
    margin-left: 32px;
    width: 471px;
    color: #cfe9e5;
}

.nic b {
    font: 700 16px/18px "DejaVu Sans", sans-serif;
    margin-right: 4px;
}

.nic span {
    font: 700 7px/6px "DejaVu Sans", sans-serif;
}

.powered {
    font-size: 10px;
    letter-spacing: 0.17px;
    color: #123;
    white-space: nowrap;
}

.powered b {
    font-size: 9.500px;
    letter-spacing: 0;
    color: #e8f6f3;
}

/* Watermark sits over both frames */
.activate {
    position: absolute;
    left: 748px;
    top: 563px;
    font-family: "Open Sans", sans-serif;
    pointer-events: none;
}

.activate-1 {
    font-size: 19.200px;
    line-height: 24px;
    color: rgba(110, 110, 110, 0.5);
}

.activate-2 {
    font-size: 13.500px;
    line-height: 24px;
    color: rgba(90, 90, 90, 0.1);
    white-space: nowrap;
}

/* Windows taskbar */
.taskbar {
    height: 40px;
    flex: none;
    display: flex;
    align-items: stretch;
    background: #1c1c1c;
}

.win-start {
    width: 48px;
    display: flex;
    align-items: center;
    justify-content: center;
}

.win-search {
    width: 288px;
    box-sizing: border-box;
    display: flex;
    align-items: center;
    padding-left: 11px;
    position: relative;
    overflow: hidden;
    background: #f2f2f2;
    color: #222;
    font: 15px Roboto, sans-serif;
}

.win-search span {
    margin-left: 13px;
}

.beach {
    position: absolute;
    right: 0;
    bottom: 0;
}

.task-icon {
    display: flex;
    align-items: center;
    justify-content: center;
    position: relative;
    box-sizing: border-box;
}

.is-open {
    border-bottom: 2px solid #7aa9dc;
}

.is-focus {
    background: #4a4a4a;
}

.task-view { width: 48px; }
.task-c1 { width: 48px; margin-left: 3px; }
.task-3g { width: 40px; margin-left: 5px; }
.task-c2 { width: 48px; margin-left: 5px; }
.task-c3 { width: 40px; margin-left: 5px; }
.task-ad { width: 40px; margin-left: 9px; }

.g3 {
    width: 24px;
    height: 26px;
    position: relative;
    background: #fff;
    color: #111;
    text-align: center;
    font: 12px/26px "DejaVu Serif", serif;
}

.g3 span {
    position: absolute;
    left: 0;
    right: 0;
    top: 0;
}

.badge {
    position: absolute;
    left: 50%;
    margin-left: 1px;
    top: 21px;
    width: 11px;
    height: 11px;
    border-radius: 50%;
}

.badge-a { background: #9ac6cf; }
.badge-b { background: #e7d3a6; box-shadow: inset 0 0 0 3px #e7d3a6, inset 0 0 0 9px #8a6a22; }
.badge-c { background: #f4b6c2; box-shadow: inset 0 0 0 3px #f4b6c2, inset 0 0 0 9px #c8192e; }

.win-tray {
    margin-left: auto;
    display: flex;
    align-items: center;
    color: #fff;
    font: 12px/18px Roboto, sans-serif;
    text-align: center;
}

.win-tray > svg:nth-child(1) { margin-right: 13px; }
.win-tray > svg:nth-child(2) { margin-right: 10px; }
.win-tray > svg:nth-child(3) { margin-right: 8px; }
.win-tray > svg:nth-child(4) { margin-right: 9px; }

.lang {
    margin-right: 11px;
}

.win-clock {
    margin-right: 20px;
}

.notify {
    position: relative;
    margin-right: 25px;
    margin-top: 3px;
}

.notify-count {
    position: absolute;
    left: 7px;
    top: 6px;
    width: 14px;
    height: 14px;
    border: 1px solid #888;
    border-radius: 50%;
    background: #1c1c1c;
    color: #fff;
    font: 700 10px/14px "Open Sans", sans-serif;
}
```
